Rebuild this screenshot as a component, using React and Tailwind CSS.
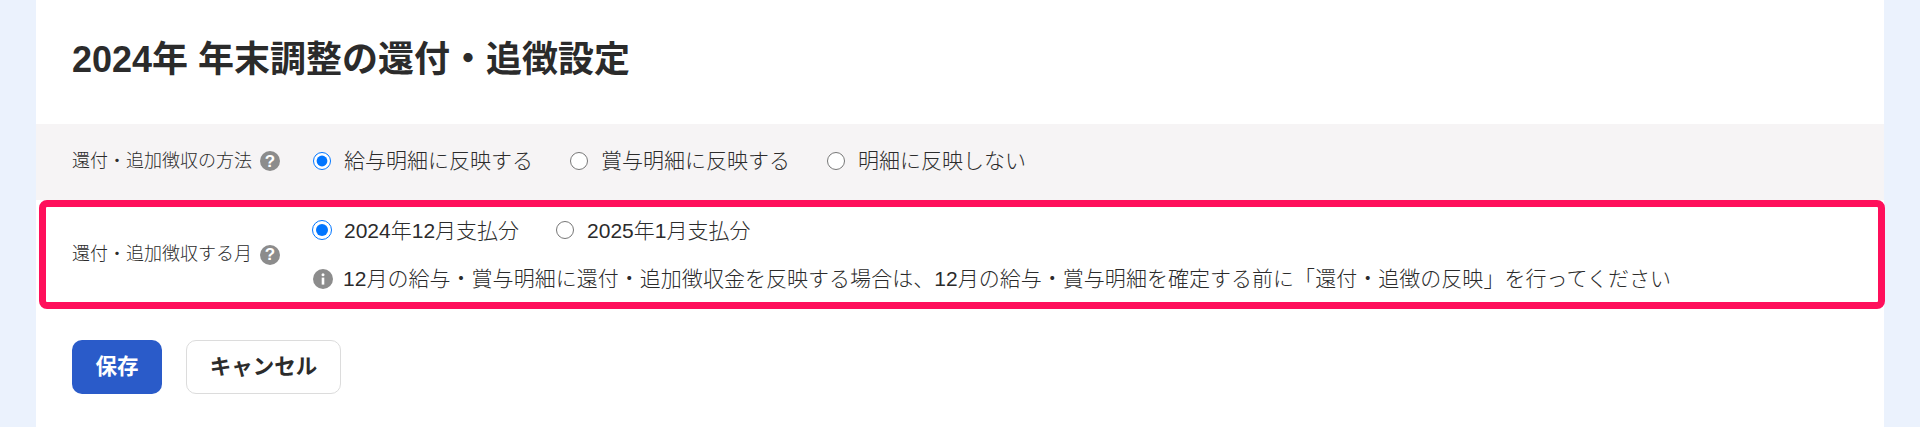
import React from 'react'

const HelpIcon = () => (
    <span className="ml-[8px] flex h-[20px] w-[20px] shrink-0 items-center justify-center rounded-full bg-[#8c8c8c] text-[17px] font-bold leading-none text-white">
        ?
    </span>
)

const InfoIcon = () => (
    <svg viewBox="0 0 20 20" className="h-[20px] w-[20px] shrink-0">
        <circle cx="10" cy="10" r="10" fill="#8c8c8c" />
        <circle cx="10" cy="5.8" r="1.5" fill="#fff" />
        <rect x="8.7" y="8.6" width="2.6" height="7" fill="#fff" />
    </svg>
)

const Radio = ({ name, label, checked, large }) => (
    <label className={large ? 'flex items-center gap-[12px]' : 'flex items-center gap-[13px]'}>
        <input
            type="radio"
            name={name}
            defaultChecked={checked}
            className={large ? 'm-0 -ml-[1px] h-[20px] w-[20px] accent-[#0075ff]' : 'm-0 h-[18px] w-[18px] accent-[#0075ff]'}
        />
        <span>{label}</span>
    </label>
)

const App = () => {
    return (
        <div className="h-[427px] overflow-hidden bg-[#ebf2fd] px-[36px] font-['Liberation_Sans','Noto_Sans_CJK_JP',sans-serif] font-light text-[#2b2b2b]">
            <div className="h-full bg-white">
                <div className="flex h-[124px] items-center pb-[4px] pl-[36px]">
                    <h1 className="text-[36px] font-bold leading-none">2024年 年末調整の還付・追徴設定</h1>
                </div>

                <div className="flex h-[76px] items-center bg-[#f6f4f5] pb-[2px] pl-[36px]">
                    <div className="flex w-[241px] items-center text-[18px]">
                        <span>還付・追加徴収の方法</span>
                        <HelpIcon />
                    </div>
                    <div className="flex items-center gap-[37px] text-[21px]">
                        <Radio name="method" label="給与明細に反映する" checked />
                        <Radio name="method" label="賞与明細に反映する" />
                        <Radio name="method" label="明細に反映しない" />
                    </div>
                </div>

                <div className="ml-[3px] mr-[-1px] flex h-[109px] items-center rounded-lg border-[7px] border-[#ff0f5b] pl-[26px]">
                    <div className="flex w-[241px] items-center text-[18px]">
                        <span>還付・追加徴収する月</span>
                        <HelpIcon />
                    </div>
                    <div className="flex flex-col gap-[17px] text-[21px]">
                        <div className="flex items-center gap-[37px]">
                            <Radio name="month" label="2024年12月支払分" checked large />
                            <Radio name="month" label="2025年1月支払分" />
                        </div>
                        <div className="flex items-center gap-[10px]">
                            <InfoIcon />
                            <span className="tracking-[0.03px]">12月の給与・賞与明細に還付・追加徴収金を反映する場合は、12月の給与・賞与明細を確定する前に「還付・追徴の反映」を行ってください</span>
                        </div>
                    </div>
                </div>

                <div className="flex gap-[24px] pl-[36px] pt-[31px]">
                    <button className="h-[54px] w-[90px] rounded-[10px] bg-[#2a5bc9] text-[21.5px] font-bold text-white">
                        保存
                    </button>
                    <button className="h-[54px] w-[155px] rounded-[10px] border border-[#dcdcdc] bg-white text-[21.5px] font-bold">
                        キャンセル
                    </button>
                </div>
            </div>
        </div>
    )
}

export default App
